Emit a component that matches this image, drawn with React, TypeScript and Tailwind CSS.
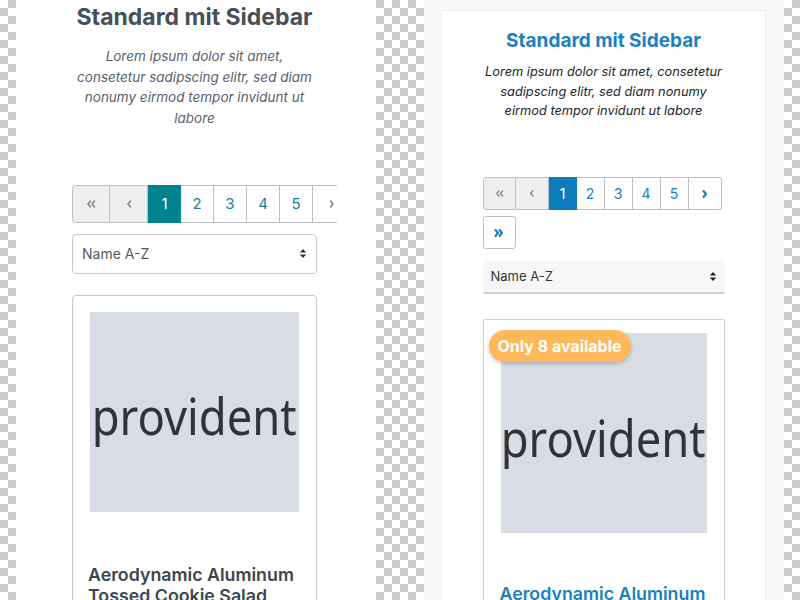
import React from 'react';

type IconProps = { className?: string };

const ChevronsLeft = ({ className }: IconProps) => (
  <svg viewBox="0 0 10 10" className={className} fill="none" stroke="currentColor" strokeWidth="1.4" strokeLinecap="round" strokeLinejoin="round">
    <path d="M4.5 2 L2 5 L4.5 8 M8.5 2 L6 5 L8.5 8" />
  </svg>
);

const ChevronLeft = ({ className }: IconProps) => (
  <svg viewBox="0 0 10 10" className={className} fill="none" stroke="currentColor" strokeWidth="1.4" strokeLinecap="round" strokeLinejoin="round">
    <path d="M6.5 2 L4 5 L6.5 8" />
  </svg>
);

const ChevronRight = ({ className }: IconProps) => (
  <svg viewBox="0 0 10 10" className={className} fill="none" stroke="currentColor" strokeWidth="1.4" strokeLinecap="round" strokeLinejoin="round">
    <path d="M3.5 2 L6 5 L3.5 8" />
  </svg>
);

const ChevronsRight = ({ className }: IconProps) => (
  <svg viewBox="0 0 10 10" className={className} fill="none" stroke="currentColor" strokeWidth="1.4" strokeLinecap="round" strokeLinejoin="round">
    <path d="M1.5 2 L4 5 L1.5 8 M5.5 2 L8 5 L5.5 8" />
  </svg>
);

const SortArrows = ({ className }: IconProps) => (
  <svg viewBox="0 0 8 12" className={className} fill="currentColor">
    <path d="M0.5 5 L4 1 L7.5 5 Z M0.5 7 L4 11 L7.5 7 Z" />
  </svg>
);

const Placeholder = () => (
  <div className="flex h-[200px] items-center justify-center overflow-hidden bg-[#d8dce3]">
    <span className="scale-x-[0.89] whitespace-nowrap pt-[8px] font-['Noto_Sans',sans-serif] text-[51px] leading-none text-[#333333]">
      provident
    </span>
  </div>
);

function ClassicColumn() {
  const pages = ['1', '2', '3', '4', '5'];
  return (
    <section className="w-[360px] shrink-0 bg-white">
      <div className="ml-[56px] w-[245px]">
        <h2 className="-mx-[10px] pt-[2px] text-center text-[23px] leading-[30px] font-bold text-[#474f58]">Standard mit Sidebar</h2>
        <p className="-mx-[2px] mt-[14px] text-center text-[13.5px] leading-[20.7px] italic text-[#5a6169]">
          Lorem ipsum dolor sit amet, consetetur sadipscing elitr, sed diam nonumy eirmod tempor invidunt ut labore
        </p>

        <div className="mt-[56px] w-[265px] overflow-hidden">
          <div className="flex h-[38px] w-max text-[15px]">
            <span className="flex w-[38px] items-center justify-center rounded-l-[4px] border border-[#b9c0c7] bg-[#eeeeee] text-[#7a8087]">
              <ChevronsLeft className="h-[10px] w-[10px]" />
            </span>
            <span className="flex w-[38px] items-center justify-center border-y border-r border-[#b9c0c7] bg-[#eeeeee] text-[#7a8087]">
              <ChevronLeft className="h-[10px] w-[10px]" />
            </span>
            {pages.map((p) => (
              <span
                key={p}
                className={
                  p === '1'
                    ? 'flex w-[33px] items-center justify-center border-y border-[#00838f] bg-[#00838f] text-white'
                    : 'flex w-[33px] items-center justify-center border-y border-r border-[#b9c0c7] bg-white text-[#1a7f8e]'
                }
              >
                {p}
              </span>
            ))}
            <span className="flex w-[38px] items-center justify-center border-y border-r border-[#b9c0c7] bg-white text-[#7a8087]">
              <ChevronRight className="h-[10px] w-[10px]" />
            </span>
            <span className="flex w-[38px] items-center justify-center rounded-r-[4px] border-y border-r border-[#b9c0c7] bg-white text-[#7a8087]">
              <ChevronsRight className="h-[10px] w-[10px]" />
            </span>
          </div>
        </div>

        <div className="mt-[11px] flex h-[40px] items-center justify-between rounded-[4px] border border-[#c4c8cc] px-[9px] text-[14px] text-[#555b61]">
          <span>Name A-Z</span>
          <SortArrows className="h-[11px] w-[8px] text-[#333333]" />
        </div>

        <div className="mt-[21px] rounded-[4px] border border-[#c4c8cc] px-[17px] pt-[16px] pb-[40px]">
          <Placeholder />
          <h3 className="-mx-[2px] mt-[52px] text-[17.8px] leading-[21px] font-semibold text-[#3c4650]">
            Aerodynamic Aluminum Tossed Cookie Salad
          </h3>
        </div>
      </div>
    </section>
  );
}

function CardColumn() {
  const pages = ['1', '2', '3', '4', '5'];
  return (
    <section className="w-[360px] shrink-0 bg-[#f9f9f9] pt-[10px] pl-[17px]">
      <div className="h-[620px] w-[325px] border border-[#ebebeb] bg-white pt-[18px]">
        <div className="mx-auto w-[242px]">
          <h2 className="text-center text-[19px] leading-[24px] font-bold text-[#1b7fc0]">Standard mit Sidebar</h2>
          <p className="mt-[9px] text-center text-[12.8px] leading-[19.7px] italic text-[#212529]">
            Lorem ipsum dolor sit amet, consetetur sadipscing elitr, sed diam nonumy eirmod tempor invidunt ut labore
          </p>

          <div className="mt-[56px] flex flex-wrap gap-y-[6px] text-[14px]">
            <div className="flex h-[33px]">
              <span className="flex w-[33px] items-center justify-center rounded-l-[3px] border border-[#b9c0c7] bg-[#eeeeee] text-[#7a8087]">
                <ChevronsLeft className="h-[9px] w-[9px]" />
              </span>
              <span className="flex w-[33px] items-center justify-center border-y border-r border-[#b9c0c7] bg-[#eeeeee] text-[#7a8087]">
                <ChevronLeft className="h-[9px] w-[9px]" />
              </span>
              {pages.map((p) => (
                <span
                  key={p}
                  className={
                    p === '1'
                      ? 'flex w-[28px] items-center justify-center border-y border-[#0d7cbd] bg-[#0d7cbd] text-white'
                      : 'flex w-[28px] items-center justify-center border-y border-r border-[#b9c0c7] bg-white text-[#1b7fc0]'
                  }
                >
                  {p}
                </span>
              ))}
              <span className="flex w-[33px] items-center justify-center rounded-r-[3px] border-y border-r border-[#b9c0c7] bg-white text-[#0d7cbd]">
                <ChevronRight className="h-[10px] w-[10px] stroke-[2]" />
              </span>
            </div>
            <div className="flex h-[33px]">
              <span className="flex w-[33px] items-center justify-center rounded-[3px] border border-[#b9c0c7] bg-white text-[#0d7cbd]">
                <ChevronsRight className="h-[10px] w-[10px] stroke-[2]" />
              </span>
            </div>
          </div>

          <div className="mt-[12px] flex h-[33px] items-center justify-between rounded-[2px] border-b-2 border-[#d4d4d4] bg-[#f7f7f7] pr-[8px] pl-[8px] text-[13px] text-[#333333]">
            <span>Name A-Z</span>
            <SortArrows className="h-[11px] w-[8px] text-[#222222]" />
          </div>

          <div className="relative mt-[25px] rounded-[2px] border border-[#cfcfcf] px-[17px] pt-[13px] pb-[40px]">
            <span className="absolute top-[10px] left-[5px] rounded-full bg-[#ffb95a] px-[9px] py-[4px] text-[16px] leading-[24px] font-bold text-white shadow-[0_2px_4px_rgba(0,0,0,0.2)]">
              Only 8 available
            </span>
            <Placeholder />
            <h3 className="-mx-[1px] mt-[50px] text-[17.8px] leading-[21px] font-semibold text-[#1b7fc0]">
              Aerodynamic Aluminum Tossed Cookie Salad
            </h3>
          </div>
        </div>
      </div>
    </section>
  );
}

export default function App() {
  return (
    <div className="flex h-[600px] w-[800px] gap-[48px] overflow-hidden bg-[conic-gradient(#cccccc_25%,#ffffff_0_50%,#cccccc_0_75%,#ffffff_0)] bg-[length:16px_16px] pl-[16px] font-['Inter',sans-serif]">
      <ClassicColumn />
      <CardColumn />
    </div>
  );
}
